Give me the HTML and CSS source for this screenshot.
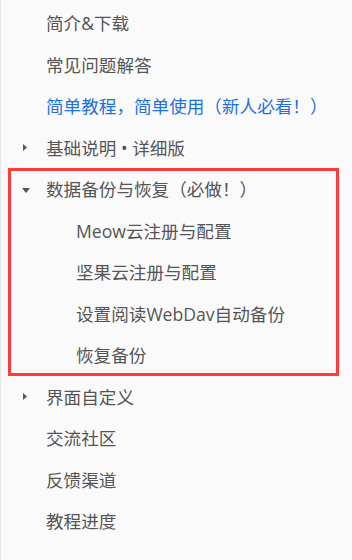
FILE: index.html
```html
<!DOCTYPE html>
<html>
 <head>
  <meta charset="utf-8">
  <title>目录</title>
  <link rel="stylesheet" href="styles.css">
 </head>
 <body>
  <nav class="toc">
   <ul class="toc_list">
    <li class="item"><span class="caret"></span><a class="link">简介&amp;下载</a></li>
    <li class="item"><span class="caret"></span><a class="link">常见问题解答</a></li>
    <li class="item"><span class="caret"></span><a class="link active">简单教程，简单使用（新人必看！）</a></li>
    <li class="item">
     <span class="caret"><svg width="8" height="8" viewBox="0 0 8 8"><polygon points="1,1 5,4.5 1,8" fill="#555"/></svg></span>
     <a class="link">基础说明 • 详细版</a>
    </li>
    <li class="group">
     <div class="item">
      <span class="caret"><svg width="8" height="8" viewBox="0 0 8 8"><polygon points="0,3 8,3 4,8" fill="#555"/></svg></span>
      <a class="link">数据备份与恢复（必做！）</a>
     </div>
     <ul class="sub_list">
      <li class="item sub"><a class="link">Meow云注册与配置</a></li>
      <li class="item sub"><a class="link">坚果云注册与配置</a></li>
      <li class="item sub"><a class="link">设置阅读WebDav自动备份</a></li>
      <li class="item sub"><a class="link">恢复备份</a></li>
     </ul>
    </li>
    <li class="item">
     <span class="caret"><svg width="8" height="8" viewBox="0 0 8 8"><polygon points="1,1 5,4.5 1,8" fill="#555"/></svg></span>
     <a class="link">界面自定义</a>
    </li>
    <li class="item"><span class="caret"></span><a class="link">交流社区</a></li>
    <li class="item"><span class="caret"></span><a class="link">反馈渠道</a></li>
    <li class="item"><span class="caret"></span><a class="link">教程进度</a></li>
   </ul>
  </nav>
 </body>
</html>
```

FILE: styles.css
```css
html, body {
  margin:0;
  height:100%;
}

body {
  background-color:#fafafa;
  font-family:"Open Sans", "Noto Sans CJK SC", "Microsoft YaHei", sans-serif;
  font-size:17.6px;
  color:#555;
}

.toc {
  min-height:100%;
  border-left:1px solid #e6e6e6;
  box-sizing:border-box;
}

.toc_list, .sub_list {
  list-style:none;
  margin:0;
  padding:0;
}

.toc_list {
  padding-top:2px;
}

.item {
  display:flex;
  align-items:center;
  height:41.5px;
  white-space:nowrap;
}

.caret {
  display:flex;
  align-items:center;
  width:45px;
  padding-left:21px;
  box-sizing:border-box;
  flex-shrink:0;
}

.caret svg {
  display:block;
}

.link {
  color:#555;
  text-decoration:none;
}

.link.active {
  color:#1f70dc;
}

.group {
  margin-left:7px;
  width:331px;
  outline:3px solid #ff3b3b;
  outline-offset:-3px;
}

.group .caret {
  width:38px;
  padding-left:14px;
}

.sub {
  padding-left:68px;
}
```
